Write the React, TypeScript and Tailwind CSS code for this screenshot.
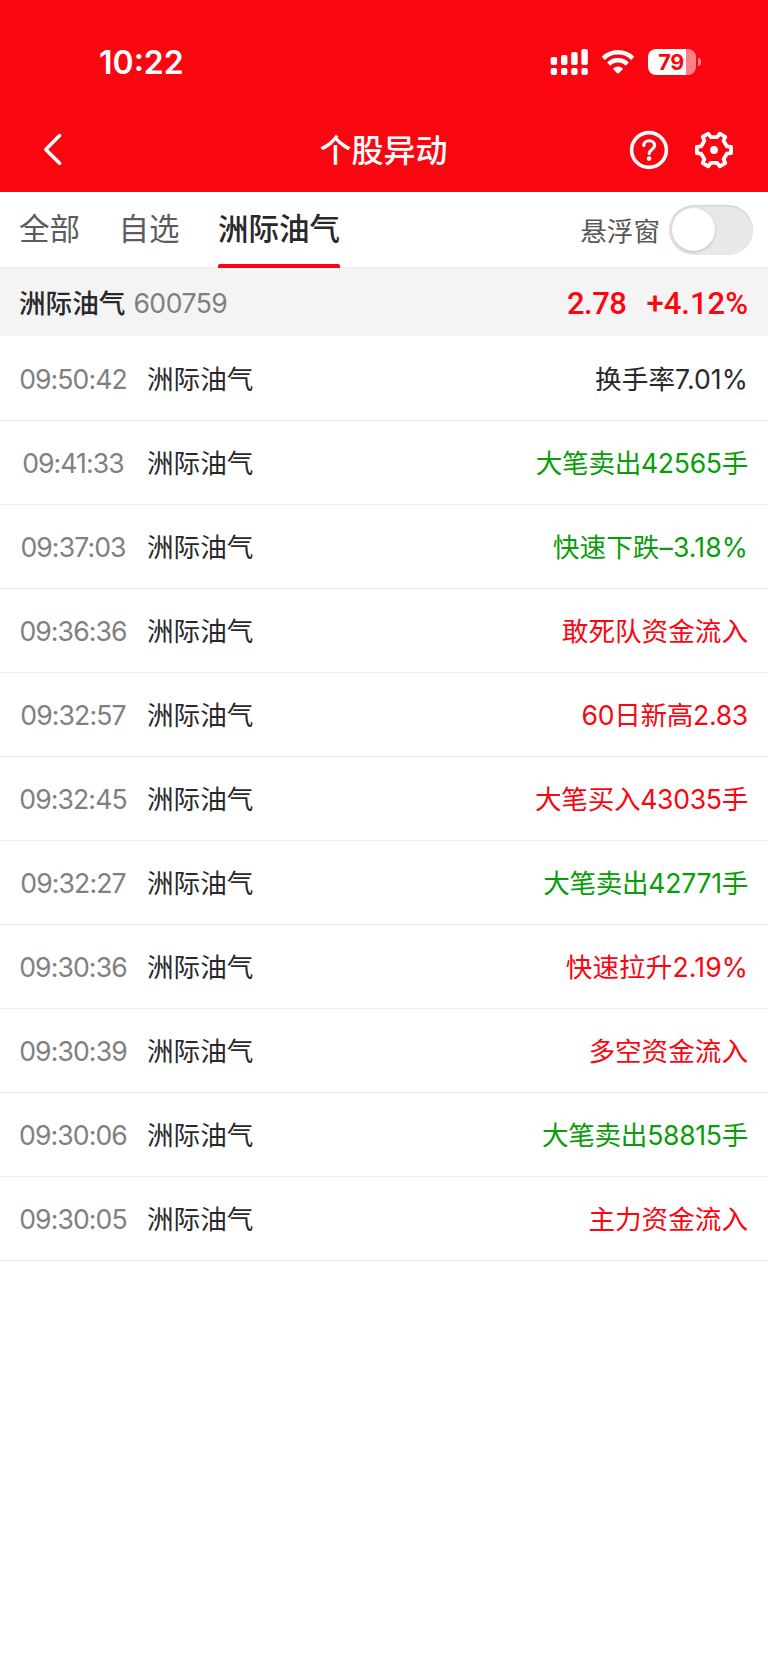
type Tone = "up" | "down" | "flat";

const tabs = ["全部", "自选", "洲际油气"];
const activeTab = 2;

const toneClass: Record<Tone, string> = {
  up: "text-[#fb0511]",
  down: "text-[#0a9d0a]",
  flat: "text-[#29292b]",
};

const records: { time: string; event: string; tone: Tone }[] = [
  { time: "09:50:42", event: "换手率7.01%", tone: "flat" },
  { time: "09:41:33", event: "大笔卖出42565手", tone: "down" },
  { time: "09:37:03", event: "快速下跌–3.18%", tone: "down" },
  { time: "09:36:36", event: "敢死队资金流入", tone: "up" },
  { time: "09:32:57", event: "60日新高2.83", tone: "up" },
  { time: "09:32:45", event: "大笔买入43035手", tone: "up" },
  { time: "09:32:27", event: "大笔卖出42771手", tone: "down" },
  { time: "09:30:36", event: "快速拉升2.19%", tone: "up" },
  { time: "09:30:39", event: "多空资金流入", tone: "up" },
  { time: "09:30:06", event: "大笔卖出58815手", tone: "down" },
  { time: "09:30:05", event: "主力资金流入", tone: "up" },
];

// percentages get looser figures, lot counts tighter ones
const eventTracking = (event: string) => {
  if (event.endsWith("%")) return "tracking-[0.1px]";
  if (event.endsWith("手")) return "tracking-[-0.3px]";
  if (event.includes(".")) return "tracking-[-0.3px]";
  return "tracking-[0px]";
};

const SignalIcon = () => (
  <svg width="38" height="28" viewBox="0 0 38 28" fill="#fff">
    <rect x="0.7" y="9" width="6.4" height="8" rx="1.8" />
    <rect x="11" y="7" width="6.4" height="10" rx="1.8" />
    <rect x="21.2" y="4" width="6.4" height="13" rx="1.8" />
    <rect x="31.4" y="1" width="6.4" height="16" rx="1.8" />
    <rect x="0.7" y="20" width="6.4" height="7" rx="2" />
    <rect x="11" y="20" width="6.4" height="7" rx="2" />
    <rect x="21.2" y="20" width="6.4" height="7" rx="2" />
    <rect x="31.4" y="20" width="6.4" height="7" rx="2" />
  </svg>
);

const WifiIcon = () => (
  <svg width="34" height="26" viewBox="0 0 34 26" fill="none" stroke="#fff" strokeWidth="4.6">
    <path d="M2.3 9.3 A21 21 0 0 1 31.7 9.3" />
    <path d="M7.7 15.1 A13.3 13.3 0 0 1 26.3 15.1" />
    <path d="M11.8 19.8 Q17 15.2 22.2 19.8 L17.8 24.2 Q17 25 16.2 24.2 Z" fill="#fff" stroke="none" />
  </svg>
);

const Battery = () => (
  <div className="flex items-center gap-[2px]">
    <div className="flex h-[26px] w-[48px] items-center justify-center overflow-hidden rounded-[8px] bg-[linear-gradient(to_right,#fff_79%,#ff8088_79%)] pr-[2px] text-[21.5px] font-bold tracking-[-0.4px] text-[#fb0511]">
      79
    </div>
    <div className="h-[8px] w-[3px] rounded-r-full bg-[#ff8088]" />
  </div>
);

const HelpIcon = () => (
  <svg width="40" height="40" viewBox="0 0 40 40" fill="none" stroke="#fff" strokeLinecap="round" strokeLinejoin="round">
    <circle cx="20" cy="20" r="17.4" strokeWidth="3.6" />
    <path d="M14.8 15.6 C14.8 9.1 25.6 9.1 25.6 15.6 C25.6 19.4 20.2 19.6 20.2 23.6" strokeWidth="3.2" />
    <circle cx="20.1" cy="28.6" r="2.3" fill="#fff" stroke="none" />
  </svg>
);

const GearIcon = () => (
  <svg width="40" height="40" viewBox="0 0 40 40" fill="none" stroke="#fff" strokeWidth="3.8" strokeLinejoin="round">
    <path d="M37.1 23.2 L32.8 23.7 L29.6 29.2 L31.3 33.2 L25.8 36.4 L23.2 32.9 H16.8 L14.2 36.4 L8.7 33.2 L10.4 29.2 L7.2 23.7 L2.9 23.2 V16.8 L7.2 16.3 L10.4 10.8 L8.7 6.8 L14.2 3.6 L16.8 7.1 H23.2 L25.8 3.6 L31.3 6.8 L29.6 10.8 L32.8 16.3 L37.1 16.8 Z" />
    <circle cx="20" cy="20" r="3.9" fill="#fff" stroke="none" />
  </svg>
);

const Header = () => (
  <header className="h-[192px] bg-[#fb0511] text-white">
    <div className="flex h-[104px] items-center justify-between pt-[20px] pr-[67px] pl-[99px]">
      <span className="pt-[2px] text-[32px] font-semibold">10:22</span>
      <div className="flex items-center">
        <SignalIcon />
        <div className="pl-[13px]">
          <WifiIcon />
        </div>
        <div className="pl-[13px]">
          <Battery />
        </div>
      </div>
    </div>
    <div className="grid h-[88px] grid-cols-3 items-center pt-[4px] pr-[34px] pl-[32px]">
      <svg width="40" height="40" viewBox="0 0 40 40" fill="none" stroke="#fff" strokeWidth="3.6" strokeLinecap="round" strokeLinejoin="round">
        <path d="M27.6 5.6 L13.8 19.4 L27.6 33.2" />
      </svg>
      <h1 className="pt-px pl-px text-center text-[32px] font-medium">个股异动</h1>
      <div className="flex justify-end gap-[25px]">
        <HelpIcon />
        <GearIcon />
      </div>
    </div>
  </header>
);

const TabBar = () => (
  <div className="flex h-[76px] justify-between border-b border-[#ececec] pr-[15px] pl-[19px]">
    <nav className="flex gap-[38.5px]">
      {tabs.map((tab, i) => (
        <div
          key={tab}
          className={
            i === activeTab
              ? "relative flex h-[76px] items-center pb-[3px] text-[30.5px] font-medium text-[#29292b]"
              : "flex h-[76px] items-center pb-[3px] text-[30.5px] text-[#5c5c5e]"
          }
        >
          {tab}
          {i === activeTab && (
            <span className="absolute bottom-0 left-0 h-[4px] w-full rounded-t-[2px] bg-[#fb0511]" />
          )}
        </div>
      ))}
    </nav>
    <div className="flex items-center gap-[9px] text-[26.6px] text-[#58585a]">
      <span className="pt-[4px]">悬浮窗</span>
      <div className="flex h-[50px] w-[84px] items-center rounded-full bg-[#e8e8e8] pl-[3px] shadow-[inset_0_1px_2px_rgba(0,0,0,0.12)]">
        <div className="h-[43px] w-[43px] rounded-full bg-white shadow-[0_1px_3px_rgba(0,0,0,0.2)]" />
      </div>
    </div>
  </div>
);

const StockBar = () => (
  <div className="flex h-[68px] items-center justify-between bg-[#f4f4f4] pt-[3px] pr-5 pl-[19px]">
    <div className="flex items-center gap-[8px] text-[26.6px]">
      <span className="font-medium text-[#29292b]">洲际油气</span>
      <span className="tracking-[-0.5px] text-[#7f7f81]">600759</span>
    </div>
    <div className="flex gap-[20px] pt-[2px] font-[Roboto] text-[31px] font-medium text-[#fb0511]">
      <span className="tracking-[-0.5px]">2.78</span>
      <span>+4.12%</span>
    </div>
  </div>
);

const App = () => {
  return (
    <div className="min-h-[1670px] w-[768px] bg-white font-['Inter','Noto_Sans_CJK_SC',sans-serif]">
      <Header />
      <TabBar />
      <StockBar />
      <ul className="pt-px">
        {records.map((record) => (
          <li
            key={record.time}
            className="flex h-[84px] items-center border-b border-[#ececec] pt-[2px] pr-5 pl-[19px] text-[26.6px]"
          >
            <span className="w-[108px] text-center tracking-[-0.9px] whitespace-nowrap text-[#808082]">
              {record.time}
            </span>
            <span className="ml-5 text-[#29292b]">洲际油气</span>
            <span className={`ml-auto ${eventTracking(record.event)} ${toneClass[record.tone]}`}>{record.event}</span>
          </li>
        ))}
      </ul>
    </div>
  );
};

export default App;
